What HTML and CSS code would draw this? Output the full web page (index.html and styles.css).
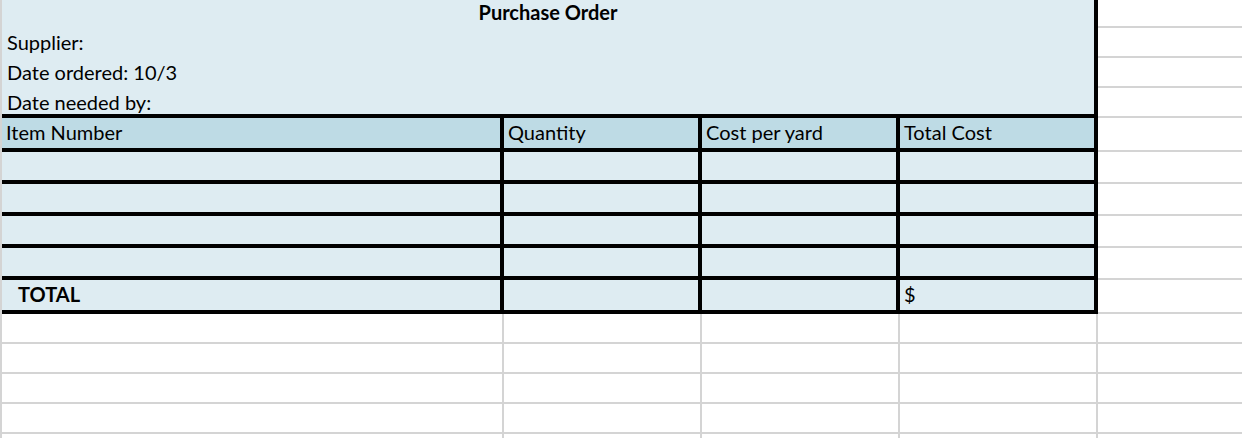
FILE: index.html
```html
<!DOCTYPE html>
<html lang="en">
<head>
<meta charset="utf-8">
<title>Purchase Order</title>
<link rel="stylesheet" href="styles.css">
</head>
<body>
<div class="sheet">
  <div class="top-block">
    <div class="title">Purchase Order</div>
    <div class="info">Supplier:</div>
    <div class="info">Date ordered: 10/3</div>
    <div class="info last">Date needed by:</div>
  </div>
  <div class="ext r1"></div>
  <div class="ext r2"></div>
  <div class="ext r3"></div>
  <div class="ext r4"></div>

  <div class="cell head">Item Number</div>
  <div class="cell head">Quantity</div>
  <div class="cell head">Cost per yard</div>
  <div class="cell head">Total Cost</div>
  <div class="ext"></div>

  <div class="cell"></div><div class="cell"></div><div class="cell"></div><div class="cell"></div><div class="ext"></div>
  <div class="cell"></div><div class="cell"></div><div class="cell"></div><div class="cell"></div><div class="ext"></div>
  <div class="cell"></div><div class="cell"></div><div class="cell"></div><div class="cell"></div><div class="ext"></div>
  <div class="cell"></div><div class="cell"></div><div class="cell"></div><div class="cell"></div><div class="ext"></div>

  <div class="cell total-label">TOTAL</div>
  <div class="cell"></div>
  <div class="cell"></div>
  <div class="cell total">$</div>
  <div class="ext"></div>

  <div class="blank"></div><div class="blank"></div><div class="blank"></div><div class="blank"></div><div class="ext"></div>
  <div class="blank"></div><div class="blank"></div><div class="blank"></div><div class="blank"></div><div class="ext"></div>
  <div class="blank"></div><div class="blank"></div><div class="blank"></div><div class="blank"></div><div class="ext"></div>
  <div class="blank"></div><div class="blank"></div><div class="blank"></div><div class="blank"></div><div class="ext"></div>
  <div class="blank"></div><div class="blank"></div><div class="blank"></div><div class="blank"></div><div class="ext"></div>
</div>
</body>
</html>
```

FILE: styles.css
```css
* { box-sizing: border-box; }

html, body {
  margin: 0;
  padding: 0;
  background: #ffffff;
  overflow: hidden;
}

body {
  font-family: Lato, "Liberation Sans", sans-serif;
  font-size: 20px;
  color: #000;
}

.sheet {
  display: grid;
  grid-template-columns: 502px 198px 198px 198px 1fr;
  grid-template-rows: 28px 30px 30px 30px 34px 32px 32px 32px 32px 34px 30px 30px 30px 30px 30px;
  border-left: 2px solid #d4d4d4;
  height: 438px;
  overflow: hidden;
}

.top-block {
  grid-column: 1 / 5;
  grid-row: 1 / 5;
  background: #deecf2;
  border-right: 4px solid #000;
  border-bottom: 4px solid #000;
  display: grid;
  grid-template-rows: 28px 30px 30px 26px;
}

.top-block > div {
  display: flex;
  align-items: flex-end;
  line-height: 20px;
  padding: 0 0 6px 5px;
}

.title {
  justify-content: center;
  font-weight: 700;
  padding-left: 0 !important;
}

.top-block > .last {
  padding-bottom: 2px;
}

.ext {
  border-bottom: 2px solid #d4d4d4;
}

.cell {
  background: #deecf2;
  border-right: 4px solid #000;
  border-bottom: 4px solid #000;
  display: flex;
  align-items: flex-end;
  line-height: 20px;
  padding: 0 0 6px 4px;
  white-space: nowrap;
}

.cell.head {
  background: #bedbe5;
}

.cell.total-label {
  font-weight: 700;
  padding-left: 16px;
}

.blank {
  border-right: 2px solid #d4d4d4;
  border-bottom: 2px solid #d4d4d4;
}
```
